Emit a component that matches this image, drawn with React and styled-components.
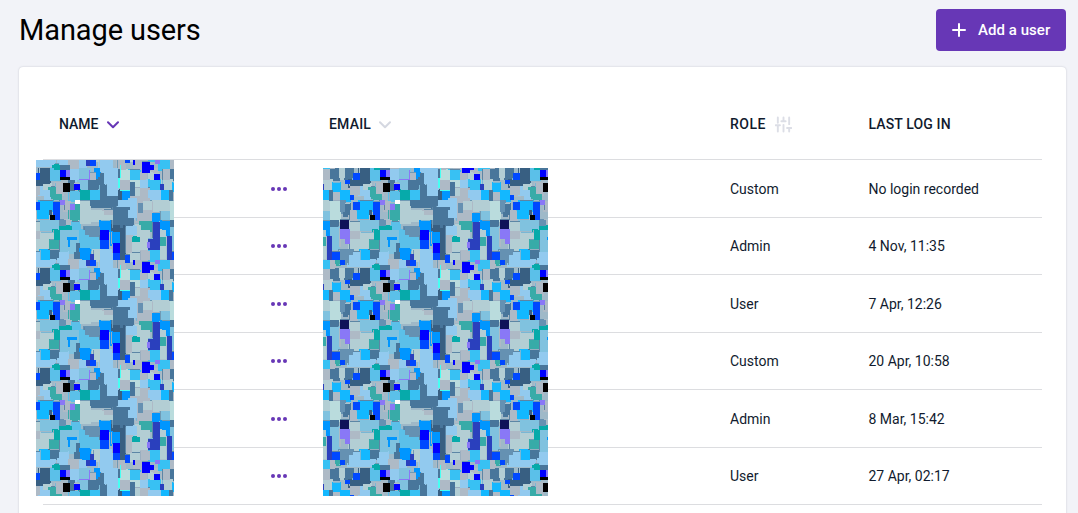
import React from 'react';
import styled, { createGlobalStyle } from 'styled-components';

const GlobalStyle = createGlobalStyle`
  * { box-sizing: border-box; }
  html, body { margin: 0; height: 100%; overflow: hidden; background: #f2f3f8; }
  body { font-family: Roboto, "Liberation Sans", sans-serif; color: #111b2e; }
`;

const Page = styled.main`
  height: 513px;
  padding: 9px 12px 0 19px;
  display: flex;
  flex-direction: column;
  overflow: hidden;
`;
const PageHeader = styled.header`
  flex: none;
  height: 58px;
  display: flex;
  justify-content: space-between;
  align-items: flex-start;
`;
const Title = styled.h1`
  margin: 0;
  font-size: 29px;
  line-height: 42px;
  font-weight: 400;
  letter-spacing: -0.1px;
  color: #000;
`;
const AddButton = styled.button`
  width: 130px;
  height: 42px;
  padding: 0 0 0 16px;
  display: flex;
  align-items: center;
  gap: 12px;
  border: 0;
  border-radius: 4px;
  background: #6737b6;
  color: #fff;
  font: 500 15px/42px Roboto, sans-serif;
  letter-spacing: 0.05px;
  white-space: nowrap;
`;
const Card = styled.section`
  position: relative;
  flex: none;
  height: 520px;
  padding: 0 24px;
  background: #fff;
  border-radius: 4px;
  box-shadow: 0 0 2px rgba(20, 25, 50, 0.22);
`;
const Row = styled.div`
  display: grid;
  grid-template-columns: 212px 58px 401px 138.5px 1fr;
  align-items: center;
  height: 57.5px;
  padding: 0.7px 0 0 16px;
  border-bottom: 1px solid #dcdde0;
  font-size: 14px;
  white-space: nowrap;
`;
const HeadRow = styled(Row)`
  height: 93px;
  padding-top: 22px;
  font-weight: 500;
`;
const HeadCell = styled.div`
  display: flex;
  align-items: center;
  gap: ${(p) => p.$gap || 8}px;
  letter-spacing: ${(p) => p.$spacing || 0}px;
`;
const Cell = styled.div``;
const MoreButton = styled.button`
  display: flex;
  width: 16px;
  padding: 0;
  border: 0;
  background: none;
  color: #6737b6;
`;
const Redaction = styled.svg`
  position: absolute;
  left: ${(p) => p.$left}px;
  top: ${(p) => p.$top}px;
  display: block;
`;
const ChevronIcon = styled.svg`
  margin-top: 2px;
`;

const Chevron = ({ color }) => (
  <ChevronIcon width="12" height="8" viewBox="0 0 12 8" fill="none" stroke={color} strokeWidth="2" strokeLinecap="round" strokeLinejoin="round">
    <path d="M1 1.2 L6 6.2 L11 1.2" />
  </ChevronIcon>
);
const Plus = () => (
  <svg width="14" height="14" viewBox="0 0 14 14" stroke="#fff" strokeWidth="2" strokeLinecap="round">
    <path d="M7 1V13M1 7H13" />
  </svg>
);
const Sliders = () => (
  <svg width="17" height="17" viewBox="0 0 24 24" fill="none" stroke="#dcdee6" strokeWidth="2.7" strokeLinecap="round">
    <path d="M4 22V14M4 9.5V2M12 22V12.5M12 7.5V2M20 22V17M20 11.5V2M1 13H7M9 7.5H15M17 17H23" />
  </svg>
);
const Dots = () => (
  <svg width="16" height="4" viewBox="0 0 16 4" fill="currentColor">
    <circle cx="2" cy="2" r="2" /><circle cx="8" cy="2" r="2" /><circle cx="14" cy="2" r="2" />
  </svg>
);

const tones = {
  p: '#b3ced4', q: '#badcdd', g: '#aebac6', l: '#92caef', s: '#80c2df', k: '#5bc0e9',
  n: '#48769b', d: '#385f82', m: '#6591b2', c: '#13b8ff', C: '#38c1f3', b: '#0096ff',
  B: '#0048ff', U: '#0000ff', t: '#06aaaa', T: '#38aba8', v: '#8978f6', i: '#2a40bd',
  x: '#000000', w: '#ffffff', a: '#46fff2', N: '#10125a',
};

// Blocks are tone,left,top,right,bottom in thirds of a pixel.
const leftBlocks = `
g,0,10,22,45 p,45,10,66,40 n,22,10,47,42 n,68,10,90,40 B,90,24,112,45 d,112,10,142,58 k,140,9,172,42
p,0,45,28,75 g,82,62,110,90 n,17,75,30,120 g,30,82,52,105 t,185,9,203,15 v,190,15,200,36 U,170,15,190,36
l,200,10,230,44 s,229,9,260,44 v,229,42,260,45 v,258,15,261,45 x,170,36,200,45 x,180,54,201,80 n,201,44,213,75 U,213,58,231,76
c,30,54,52,82 B,65,45,80,58 d,82,46,120,62 l,110,62,133,88 p,120,56,145,75 T,135,66,160,95 l,130,75,140,100
g,160,55,180,88 c,0,75,17,103 c,52,78,80,105 B,80,90,92,104 T,155,88,175,98 s,233,44,258,75
t,231,75,262,105 C,262,75,292,105 k,200,80,230,105 g,260,24,278,45 b,278,10,291,36 n,255,45,285,75
l,303,10,345,52 n,290,28,300,58 n,290,60,312,122 n,290,92,345,122 l,312,58,345,92 n,262,105,345,123 v,170,105,187,120
g,187,110,200,135 T,215,118,231,140 T,200,135,231,165 v,200,118,215,135 w,216,105,231,118 p,231,108,261,137
m,50,105,66,140 B,89,112,112,135 B,149,112,172,165 c,112,108,150,135 c,102,135,138,162 d,138,135,144,150
x,141,150,156,165 q,22,108,50,165 p,0,120,22,165 n,65,118,80,150 g,81,137,103,165 N,51,165,77,192
v,50,192,81,222 v,66,222,81,238 b,0,170,20,212 n,22,165,45,185 s,22,185,47,223 s,22,222,47,250
p,81,170,110,200 g,81,197,110,222 s,111,165,168,192 m,168,165,190,182 g,190,165,204,180 t,168,184,206,195
p,80,222,110,253 p,115,203,152,222 t,153,195,170,224 T,141,225,168,252 p,110,225,135,250
k,207,172,232,200 k,229,195,258,225 s,170,195,228,225 b,192,216,222,245 s,200,225,228,262 s,170,225,195,285
k,228,222,255,250 k,255,215,288,252 n,218,235,230,275 b,236,262,262,285 i,248,285,265,303 B,262,285,280,303
i,262,268,272,285 b,228,250,262,262 p,262,137,303,165 g,303,135,330,150 p,232,137,262,170 p,304,150,332,165
n,330,140,360,190 d,330,180,352,200 m,245,185,290,210 b,294,168,322,195 U,291,195,318,225 B,291,225,318,252
b,327,200,352,236 U,330,237,351,264 B,330,264,350,285 d,352,200,366,270 i,12,213,28,285 t,0,215,10,240
B,28,262,50,285 m,52,255,90,295 l,90,262,112,285 c,113,256,141,285 n,141,255,168,280 l,77,270,100,300
l,228,285,248,308 l,100,285,155,300 B,51,285,66,300 T,36,285,52,297 g,20,285,36,312 c,0,285,20,312 t,153,297,170,315
l,290,255,327,315 l,168,262,195,300 g,195,285,228,312 n,170,300,200,315 p,274,255,290,285 g,47,192,52,240`;

const rightBlocks = `
n,15,10,23,45 l,0,10,15,50 a,14,40,22,68 q,21,15,52,45 C,52,15,80,44 g,82,24,100,45 U,87,9,111,22
p,110,20,123,45 g,120,9,135,25 U,124,27,141,45 q,52,45,80,65 g,22,45,50,75 a,22,74,50,77 l,81,45,105,70 C,112,46,141,74
n,50,50,66,92 b,27,77,50,105 d,15,75,27,105 g,50,92,82,110 g,82,70,112,110 l,105,75,140,100 i,141,58,153,75
p,66,68,82,92 l,12,105,45,125 l,45,100,72,135 n,0,125,50,180 l,45,135,72,158 g,72,110,120,150 p,90,108,117,135
p,120,108,170,137 m,76,115,90,145 g,72,150,118,168 b,118,144,141,168 s,144,138,170,165 n,35,160,60,185
l,40,183,72,210 p,72,180,84,216 T,83,167,113,195 p,82,197,108,220 i,119,170,141,225 i,105,222,141,255
v,102,232,112,250 b,147,168,171,195 p,135,195,160,215 T,141,215,160,243 d,22,180,36,240 b,0,200,20,235
U,0,235,20,264 t,58,216,80,230 p,55,230,82,260 g,40,210,56,265 p,82,220,105,255 g,84,257,112,285
C,112,255,141,285 p,141,245,160,275 v,125,285,141,297 U,87,290,111,325 U,102,300,123,314 B,36,270,52,295
p,52,265,82,285 U,60,285,66,300 d,22,240,35,290 g,66,285,87,310 g,14,285,36,312 C,141,285,171,312 a,21,300,24,340`;

const strongTones = 'xwUvNaiB';
const parseBlocks = (text, origin) => text.trim().split(/\s+/).map((entry) => {
  const [tone, ...edges] = entry.split(',');
  const [l, t, r, b] = edges.map((n) => Math.round(Number(n) / 3));
  return { strong: strongTones.includes(tone), fill: tones[tone], x: l + origin, y: t - 3, w: r - l, h: b - t };
});
const parsed = [...parseBlocks(rightBlocks, 113), ...parseBlocks(leftBlocks, 3)];
const blocks = [...parsed.filter((b) => !b.strong), ...parsed.filter((b) => b.strong)];
const tileOffsets = [[0, 0], [-160, 0], [0, -100], [-160, -100]];
const edgeTones = ['#6f9ab5', '#a9c2cf', '#5c86a5', '#79b7d5', '#9aaec0'];

const Tiled = ({ children }) => tileOffsets.map(([dx, dy]) => (
  <g key={`${dx}/${dy}`} transform={`translate(${dx} ${dy})`}>{children}</g>
));

const Mosaic = ({ id, x, y, width, height }) => (
  <Redaction $left={x - 19} $top={y - 67} width={width} height={height} shapeRendering="crispEdges" aria-hidden="true">
    <defs>
      <pattern id={id} x={320 - x} y={168 - y} width="160" height="100" patternUnits="userSpaceOnUse">
        <rect width="160" height="100" fill="#9fb9c8" />
        <Tiled>
          {blocks.filter((b) => !b.strong).map((b, i) => (
            <rect key={i} x={b.x - 2} y={b.y - 1} width={b.w + 3} height={b.h + 3} fill={b.fill} />
          ))}
        </Tiled>
        <Tiled>
          {blocks.filter((b) => b.w > 4 && b.h > 4).map((b, i) => (
            <rect key={i} x={b.x - (i % 2)} y={b.y - ((i + 1) % 2)} width={b.w} height={b.h} fill={edgeTones[i % 5]} />
          ))}
        </Tiled>
        <Tiled>
          {blocks.map((b, i) => (
            <rect key={i} x={b.x} y={b.y} width={b.w} height={b.h} fill={b.fill} />
          ))}
        </Tiled>
      </pattern>
    </defs>
    <rect width={width} height={height} fill={`url(#${id})`} />
  </Redaction>
);

const users = [
  ['Custom', 'No login recorded'],
  ['Admin', '4 Nov, 11:35'],
  ['User', '7 Apr, 12:26'],
  ['Custom', '20 Apr, 10:58'],
  ['Admin', '8 Mar, 15:42'],
  ['User', '27 Apr, 02:17'],
];

export default function App() {
  return (
    <>
      <GlobalStyle />
      <Page>
        <PageHeader>
          <Title>Manage users</Title>
          <AddButton><Plus />Add a user</AddButton>
        </PageHeader>
        <Card>
          <HeadRow>
            <HeadCell>NAME <Chevron color="#6737b6" /></HeadCell>
            <span />
            <HeadCell $spacing={0.2}>EMAIL <Chevron color="#d5d8e1" /></HeadCell>
            <HeadCell $spacing={0.5} $gap={9}>ROLE <Sliders /></HeadCell>
            <HeadCell $spacing={0.13}>LAST LOG IN</HeadCell>
          </HeadRow>
          {users.map(([role, login], i) => (
            <Row key={i}>
              <span />
              <MoreButton aria-label="More"><Dots /></MoreButton>
              <span />
              <Cell>{role}</Cell>
              <Cell>{login}</Cell>
            </Row>
          ))}
          <Mosaic id="names" x={36} y={160} width={138} height={336} />
          <Mosaic id="emails" x={323} y={168} width={225} height={328} />
        </Card>
      </Page>
    </>
  );
}
